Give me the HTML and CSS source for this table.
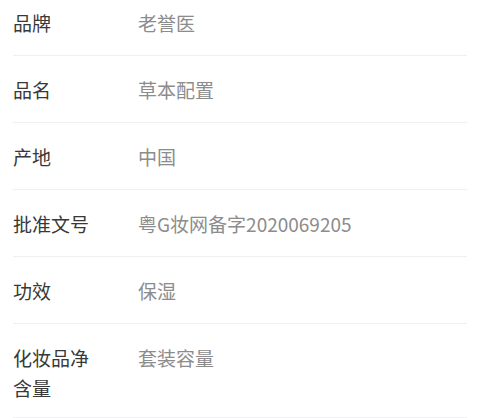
FILE: index.html
```html
<!DOCTYPE html>
<html lang="zh-CN">
<head>
<meta charset="utf-8">
<link rel="stylesheet" href="styles.css">
</head>
<body>
<div class="list">
  <div class="row"><div class="label">品牌</div><div class="value">老誉医</div></div>
  <div class="row"><div class="label">品名</div><div class="value">草本配置</div></div>
  <div class="row"><div class="label">产地</div><div class="value">中国</div></div>
  <div class="row"><div class="label">批准文号</div><div class="value">粤G妆网备字2020069205</div></div>
  <div class="row"><div class="label">功效</div><div class="value">保湿</div></div>
  <div class="row row-last"><div class="label">化妆品净<br>含量</div><div class="value">套装容量</div></div>
</div>
</body>
</html>
```
FILE: styles.css
```css
html, body {
  margin: 0;
  padding: 0;
  background: #ffffff;
  overflow: hidden;
}
body {
  font-family: "Noto Sans CJK SC", "Noto Sans", sans-serif;
  font-size: 19px;
  line-height: 30px;
}
.list {
  margin-top: -11px;
  padding: 0 10px 0 13px;
}
.row {
  display: flex;
  padding: 19px 0 17px;
  border-bottom: 1px solid #f0f0f2;
}
.row-last {
  padding-bottom: 14px;
}
.label {
  width: 125px;
  flex: none;
  color: #383838;
}
.value {
  color: #8c8c8c;
}
```
